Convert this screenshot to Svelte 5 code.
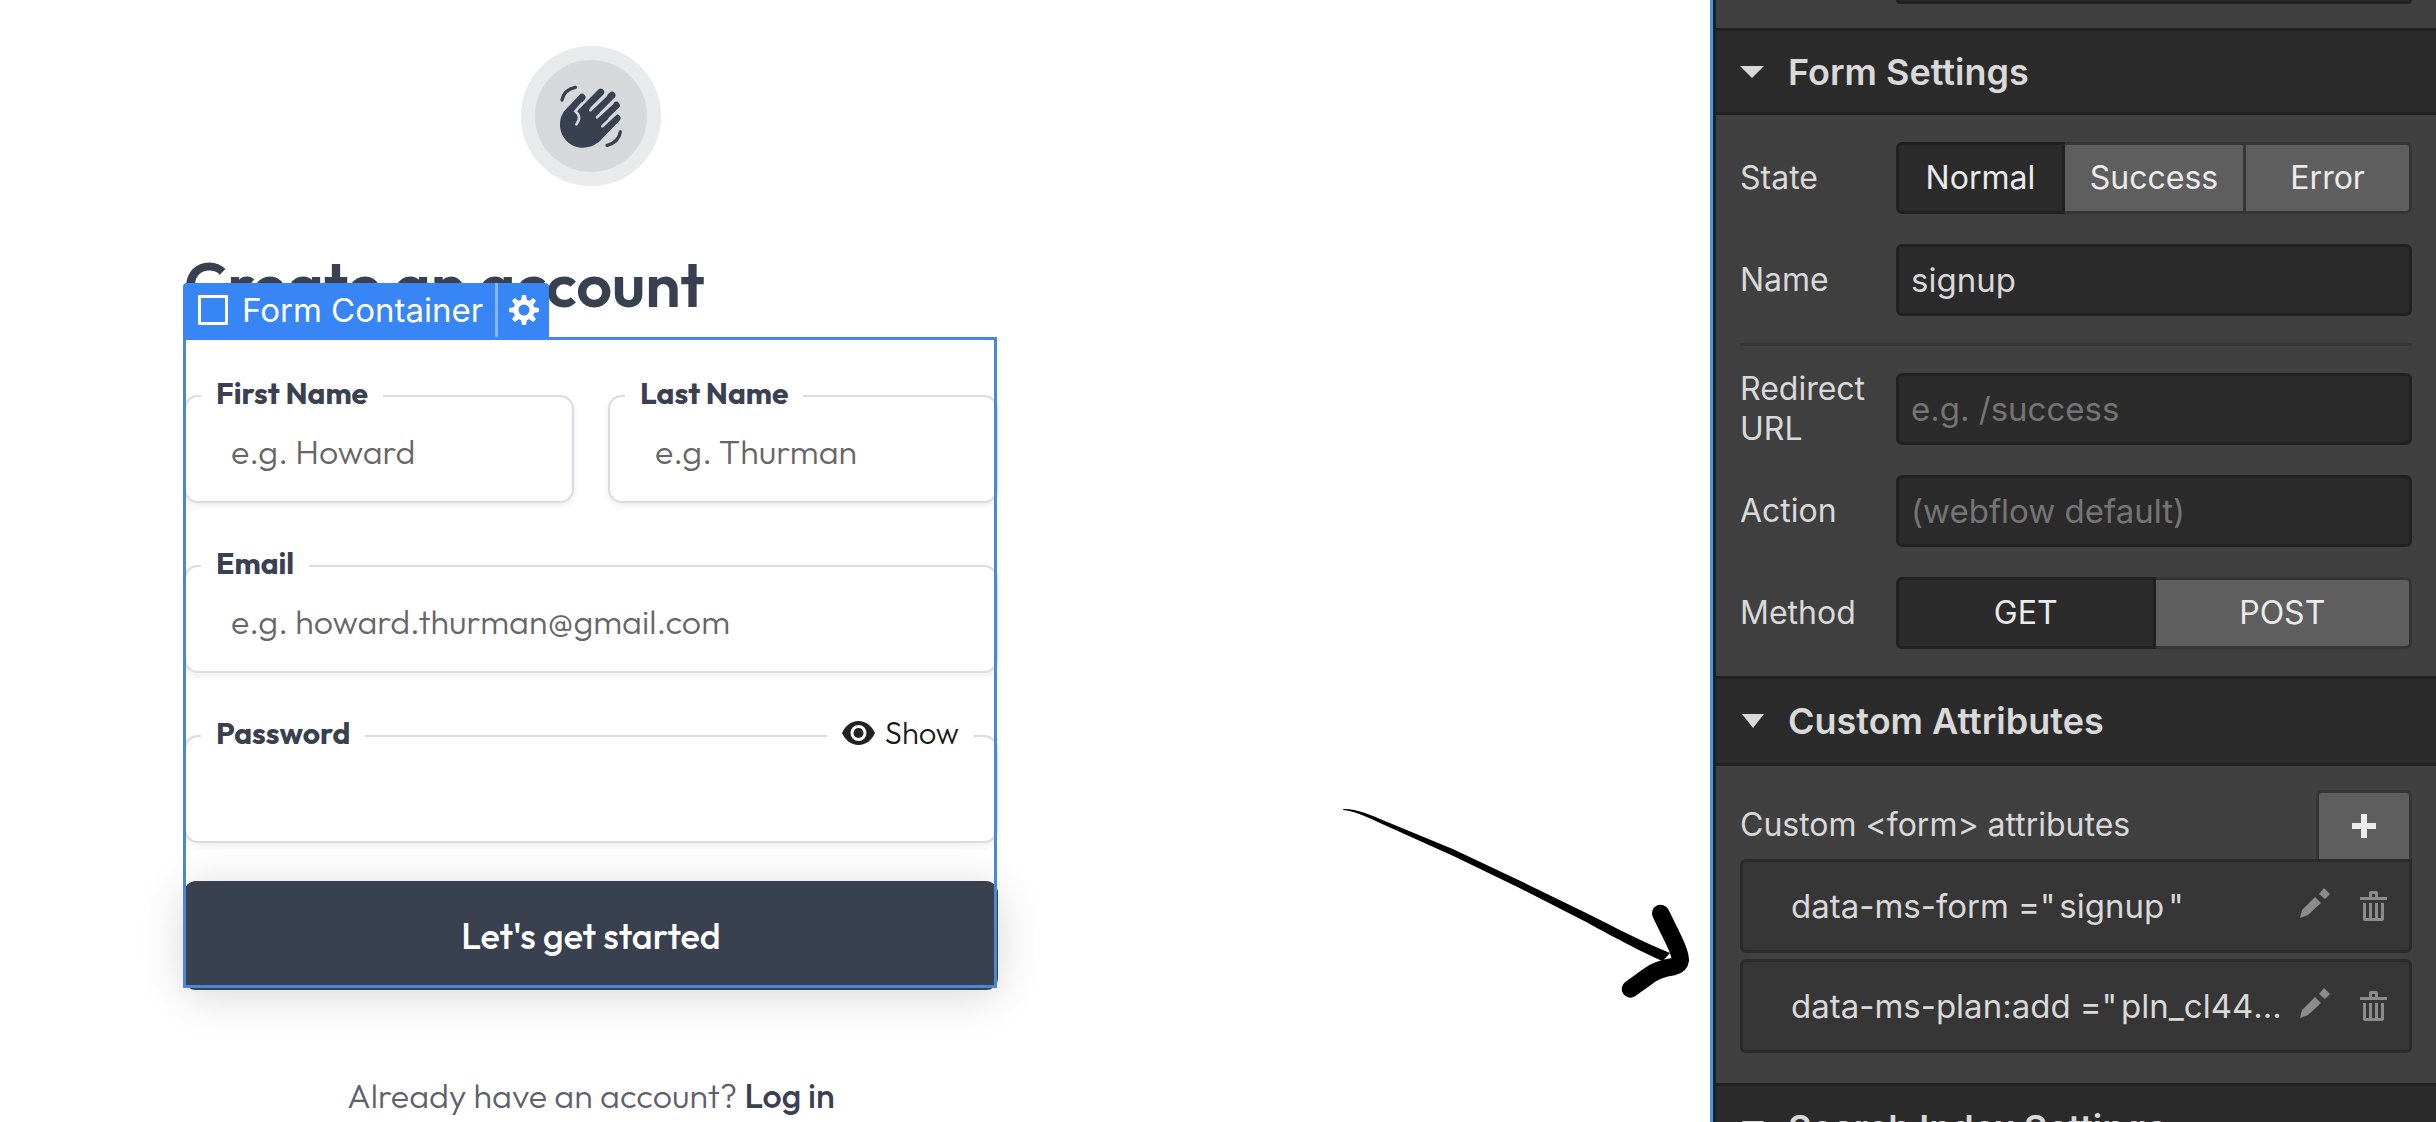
<script>
	let formState = "Normal";
	let formName = "signup";
	let method = "GET";
	let redirect = "";
	let action = "";
	let password = "";
	let showPassword = false;

	const states = ["Normal", "Success", "Error"];
	const methods = ["GET", "POST"];

	let attributes = [
	  { name: "data-ms-form", value: "signup" },
	  { name: "data-ms-plan:add", value: "pln_cl44l0a2h001w0ukg" }
	];

	function removeAttribute(n) {
	  attributes = attributes.filter((_, i) => i !== n);
	}

	function addAttribute() {
	  attributes = [...attributes, { name: "data-ms", value: "" }];
	}
</script>

<div class="designer">
	<main class="canvas">
		<div class="signup">
			<div class="badge">
				<svg viewBox="168 154 210 210" aria-hidden="true">
					<g class="hand">
						<path class="palm" d="M190 249 L205 232 L240 236 L285 235 L315 265 L357 274 L302 332 C288 346 270 354 249 354 C210 354 180 323 180 285 C180 270 183 258 190 249Z" />
						<path class="finger" d="M246 203 L200 252 M302 188 L235 255 M336 197 L265 268 M349 227 L285 290 M351 265 L295 321" />
						<path class="motion" d="M186 211 Q192 180 226 173 M361 307 Q356 338 321 347" />
					</g>
					<path class="gap" d="M271 242 L318 197 M291 263 L337 220 M307 290 L352 248" />
					<path class="gap" d="M246 222 L226 245 Q247 262 229 284" />
				</svg>
			</div>

			<h1>Create an account</h1>

			<form class="container" on:submit|preventDefault>
				<div class="tag">
					<span class="tag-name">
						<span class="square"></span>
						Form Container
					</span>
					<button type="button" class="gear" aria-label="Form settings">
						<svg viewBox="-15 -15 30 30">
							<circle r="8" />
							{#each [0, 45, 90, 135, 180, 225, 270, 315] as angle}
								<path d="M-3 -9 L-2 -15 H2 L3 -9Z" transform="rotate({angle})" />
							{/each}
						</svg>
					</button>
				</div>

				<div class="names">
					<div class="field">
						<label for="first">First Name</label>
						<input id="first" type="text" placeholder="e.g. Howard" />
					</div>
					<div class="field">
						<label for="last">Last Name</label>
						<input id="last" type="text" placeholder="e.g. Thurman" />
					</div>
				</div>
				<div class="field">
					<label for="email">Email</label>
					<input id="email" type="email" placeholder="e.g. howard.thurman@gmail.com" />
				</div>
				<div class="field">
					<label for="password">Password</label>
					<input id="password" type={showPassword ? "text" : "password"} value={password} />
					<button type="button" class="show" on:click={() => (showPassword = !showPassword)}>
						<svg viewBox="0 0 33 24" aria-hidden="true">
							<path d="M16.5 0 C9 0 3 5 0 12 C3 19 9 24 16.5 24 C24 24 30 19 33 12 C30 5 24 0 16.5 0Z M16.5 4 a8 8 0 1 1 0 16 a8 8 0 1 1 0 -16Z" />
							<circle cx="16.5" cy="12" r="5" />
						</svg>
						Show
					</button>
				</div>
				<button type="submit" class="submit">Let's get started</button>
			</form>

			<p class="login">Already have an account? <a href="#login">Log in</a></p>
		</div>

		<svg class="arrow" viewBox="60 81 1059 588" aria-hidden="true">
			<path d="M70 87 C110 86 150 104 200 125 L400 208 L600 302 L800 400 C880 440 960 482 1050 519 L1028 543 C980 524 900 482 800 427 L600 325 L400 228 L200 138 C150 116 110 94 70 90Z" />
			<path class="head" d="M1022 400 L1062 482 Q1081 522 1081 540 Q1079 555 1060 560 Q1010 568 985 588 L931 627" />
		</svg>
	</main>

	<aside class="panel">
		<div class="previous">
			<div class="stub"></div>
		</div>

		<h2><span class="caret"></span>Form Settings</h2>
		<section class="settings">
			<div class="row">
				<span class="name">State</span>
				<div class="segments" role="group" aria-label="State">
					{#each states as s}
						<button class:active={formState === s} on:click={() => (formState = s)}>{s}</button>
					{/each}
				</div>
			</div>
			<div class="row">
				<label class="name" for="form-name">Name</label>
				<input id="form-name" type="text" bind:value={formName} />
			</div>
			<hr />
			<div class="row">
				<label class="name" for="redirect">Redirect URL</label>
				<input id="redirect" type="text" placeholder="e.g. /success" bind:value={redirect} />
			</div>
			<div class="row">
				<label class="name" for="action">Action</label>
				<input id="action" type="text" placeholder="(webflow default)" bind:value={action} />
			</div>
			<div class="row">
				<span class="name">Method</span>
				<div class="segments" role="group" aria-label="Method">
					{#each methods as m}
						<button class:active={method === m} on:click={() => (method = m)}>{m}</button>
					{/each}
				</div>
			</div>
		</section>

		<h2 class="tall"><span class="caret"></span>Custom Attributes</h2>
		<section class="attributes">
			<div class="attributes-head">
				<span>Custom &lt;form&gt; attributes</span>
				<button class="add" aria-label="Add attribute" on:click={addAttribute}>
					<svg viewBox="0 0 24 24"><path d="M9 0h6v9h9v6h-9v9H9v-9H0V9h9z" /></svg>
				</button>
			</div>
			<ul>
				{#each attributes as attribute, i}
					<li>
						<span class="pair">{attribute.name} ="<span class="value">{attribute.value}</span>"</span>
						<button class="icon pencil" aria-label="Edit">
							<svg viewBox="0 0 30 30">
								<path d="M0 30 L2 22 L15 9 L21 15 L8 27Z M19 6 L24 0 L30 6 L25 11Z" />
							</svg>
						</button>
						<button class="icon" aria-label="Delete" on:click={() => removeAttribute(i)}>
							<svg viewBox="0 0 27 30">
								<path d="M0 6 H9 V2 Q9 0 11 0 H16 Q18 0 18 2 V6 H27 V9 H0Z M12 3 V6 H15 V3Z" fill-rule="evenodd" />
								<path d="M3 12 H6 V27 H9 V12 H12 V27 H15 V12 H18 V27 H21 V12 H24 V28 Q24 30 22 30 H5 Q3 30 3 28Z" />
							</svg>
						</button>
					</li>
				{/each}
			</ul>
		</section>

		<h2 class="tall"><span class="caret"></span>Search Index Settings</h2>
	</aside>
</div>

<style>
	:global(body) {
	  margin: 0;
	  background-color: #fff;
	}

	.designer {
	  display: flex;
	  height: 100vh;
	  overflow: hidden;
	  font-family: Inter, "Liberation Sans", sans-serif;
	  font-size: 32px;
	  line-height: 40px;
	}

	.designer * {
	  box-sizing: border-box;
	}

	button,
	input {
	  font: inherit;
	  color: inherit;
	  margin: 0;
	}

	button {
	  border: 0;
	  padding: 0;
	  background: none;
	  cursor: pointer;
	}

	/* Canvas */
	.canvas {
	  position: relative;
	  flex: 1;
	  min-width: 0;
	  padding: 46px 184px 0;
	  font-family: Outfit, Lato, "Open Sans", sans-serif;
	  color: #394150;
	}

	.signup {
	  max-width: 814px;
	}

	.badge {
	  display: flex;
	  align-items: center;
	  justify-content: center;
	  width: 140px;
	  height: 140px;
	  margin: 0 auto;
	  border: 14px solid #e9eaec;
	  border-radius: 50%;
	  background-color: #d7d8db;
	}

	.badge svg {
	  width: 70px;
	  height: 70px;
	}

	.palm {
	  fill: #394150;
	}

	.finger {
	  fill: none;
	  stroke: #394150;
	  stroke-width: 21;
	  stroke-linecap: round;
	}

	.motion {
	  fill: none;
	  stroke: #394150;
	  stroke-width: 10;
	  stroke-linecap: round;
	}

	.gap {
	  fill: none;
	  stroke: #d7d8db;
	  stroke-width: 8;
	  stroke-linecap: round;
	}

	h1 {
	  margin: 58px 0 0;
	  font-size: 63px;
	  line-height: 80px;
	  font-weight: 600;
	}

	.container {
	  position: relative;
	  display: flex;
	  flex-direction: column;
	  gap: 62px;
	  padding-top: 71px;
	}

	/* Selection outline drawn over the form */
	.container::after {
	  content: "";
	  position: absolute;
	  inset: 13px 1px 2px -1px;
	  border: 3px solid #4a87d5;
	  pointer-events: none;
	}

	.tag {
	  position: absolute;
	  z-index: 1;
	  top: -41px;
	  left: -1px;
	  display: flex;
	  height: 57px;
	  padding-bottom: 3px;
	  border-radius: 4px 4px 0 0;
	  background-color: #3885f6;
	  color: #fff;
	  font-family: Inter, "Liberation Sans", sans-serif;
	  font-size: 33px;
	  white-space: nowrap;
	}

	.tag-name {
	  display: flex;
	  align-items: center;
	  gap: 14px;
	  padding: 0 12px 0 15px;
	}

	.square {
	  width: 30px;
	  height: 30px;
	  border: 3px solid #fff;
	}

	.gear {
	  width: 54px;
	  border-left: 3px solid #88b6f9;
	}

	.gear svg {
	  display: block;
	  width: 30px;
	  height: 30px;
	  margin: 0 auto;
	  fill: #fff;
	}

	.gear circle {
	  fill: none;
	  stroke: #fff;
	  stroke-width: 5;
	}

	.names {
	  display: grid;
	  grid-template-columns: 1fr 1fr;
	  gap: 34px;
	}

	.field {
	  position: relative;
	}

	.field input {
	  display: block;
	  width: 100%;
	  height: 108px;
	  padding: 4px 45px 0;
	  border: 2px solid #dcdbe4;
	  border-radius: 14px;
	  background-color: #fff;
	  box-shadow: 0 3px 6px rgba(40, 40, 90, 0.08);
	  font-size: 34px;
	  font-weight: 300;
	  outline: 0;
	}

	.field input::placeholder {
	  color: #666;
	  opacity: 1;
	}

	.field label,
	.show {
	  position: absolute;
	  top: -22px;
	  padding: 0 15px;
	  background-color: #fff;
	  font-size: 30px;
	}

	.field label {
	  left: 17px;
	  font-weight: 700;
	}

	.show {
	  right: 24px;
	  display: flex;
	  align-items: center;
	  gap: 10px;
	  font-size: 31px;
	  font-weight: 300;
	  color: #1a1a1a;
	}

	.show svg {
	  width: 33px;
	  height: 24px;
	  fill: #222;
	  fill-rule: evenodd;
	}

	.submit {
	  height: 109px;
	  margin-top: -24px;
	  border-radius: 12px;
	  background-color: #394150;
	  box-shadow: 0 6px 45px rgba(0, 0, 0, 0.16);
	  color: #fff;
	  font-size: 36px;
	  font-weight: 500;
	}

	.login {
	  margin: 86px 0 0;
	  text-align: center;
	  font-size: 34px;
	  font-weight: 300;
	  color: #5c616d;
	}

	.login a {
	  color: #394150;
	  font-weight: 500;
	  text-decoration: none;
	}

	.arrow {
	  position: absolute;
	  top: 807px;
	  right: 17px;
	  width: 353px;
	  height: 196px;
	}

	.head {
	  fill: none;
	  stroke: #000;
	  stroke-width: 52;
	  stroke-linecap: round;
	}

	/* Settings panel */
	.panel {
	  flex: 0 0 726px;
	  min-width: 0;
	  border-left: 3px solid #5294e2;
	  box-shadow: inset 3px 0 #1b1f27;
	  padding-left: 3px;
	  background-color: #404040;
	  color: #d9d9d9;
	}

	.previous {
	  height: 28px;
	  padding: 0 24px 0 180px;
	}

	.stub {
	  height: 4px;
	  border: 3px solid #212121;
	  border-top: 0;
	  border-radius: 0 0 6px 6px;
	  background-color: #2b2b2b;
	}

	h2 {
	  display: flex;
	  align-items: center;
	  gap: 24px;
	  height: 87px;
	  margin: 0;
	  padding: 0 24px;
	  border: solid #212121;
	  border-width: 3px 0;
	  background-color: #2b2b2b;
	  font-size: 36px;
	  font-weight: 600;
	}

	h2.tall {
	  height: 90px;
	}

	.caret {
	  border: 12px solid transparent;
	  border-top-color: #d9d9d9;
	  border-bottom: 0;
	}

	.tall .caret {
	  margin-left: 2px;
	  border-width: 14px 11px 0;
	}

	.settings {
	  display: flex;
	  flex-direction: column;
	  gap: 30px;
	  padding: 27px 24px;
	}

	.row {
	  display: grid;
	  grid-template: 72px / 132px 1fr;
	  gap: 24px;
	  align-items: center;
	}

	.row input {
	  width: 100%;
	  height: 72px;
	  padding: 0 12px;
	  border: 3px solid #212121;
	  border-radius: 6px;
	  background-color: #2b2b2b;
	  font-size: 33px;
	  outline: 0;
	}

	.row input::placeholder {
	  color: #757575;
	  opacity: 1;
	}

	hr {
	  width: 100%;
	  height: 3px;
	  margin: -3px 0;
	  border: 0;
	  background-color: #363636;
	}

	.segments {
	  display: flex;
	  height: 72px;
	}

	.segments button {
	  flex: 1 1 0;
	  padding: 0 25px;
	  border: 3px solid #363636;
	  border-left-width: 0;
	  background-color: #5e5e5e;
	  color: #ebebeb;
	}

	.segments button:first-child {
	  border-left-width: 3px;
	  border-radius: 6px 0 0 6px;
	}

	.segments button:last-child {
	  border-radius: 0 6px 6px 0;
	}

	.segments button.active {
	  border-color: #212121;
	  background-color: #2b2b2b;
	}

	.attributes {
	  padding: 24px 24px 30px;
	}

	.attributes-head {
	  display: flex;
	  align-items: center;
	  justify-content: space-between;
	  height: 69px;
	}

	.add {
	  width: 96px;
	  height: 69px;
	  border: 3px solid #363636;
	  border-bottom: 0;
	  border-radius: 6px 6px 0 0;
	  background-color: #5e5e5e;
	}

	.add svg {
	  display: block;
	  width: 24px;
	  height: 24px;
	  margin: 0 auto;
	  fill: #ebebeb;
	}

	ul {
	  display: flex;
	  flex-direction: column;
	  gap: 6px;
	  margin: 0;
	  padding: 0;
	  list-style: none;
	}

	li {
	  display: flex;
	  align-items: center;
	  height: 94px;
	  padding: 0 22px 0 48px;
	  border: 3px solid #2b2b2b;
	  border-radius: 6px;
	  background-color: #363636;
	  font-size: 33px;
	}

	li:first-child {
	  border-top-right-radius: 0;
	}

	.pair {
	  flex: 1;
	  min-width: 0;
	  overflow: hidden;
	  white-space: nowrap;
	  text-overflow: ellipsis;
	}

	.value {
	  margin: 0 4px;
	}

	.icon svg {
	  display: block;
	  width: 27px;
	  height: 30px;
	  fill: #8c8c8c;
	}

	.pencil {
	  margin: 0 30px 6px 12px;
	}

	.pencil svg {
	  width: 30px;
	}
</style>
